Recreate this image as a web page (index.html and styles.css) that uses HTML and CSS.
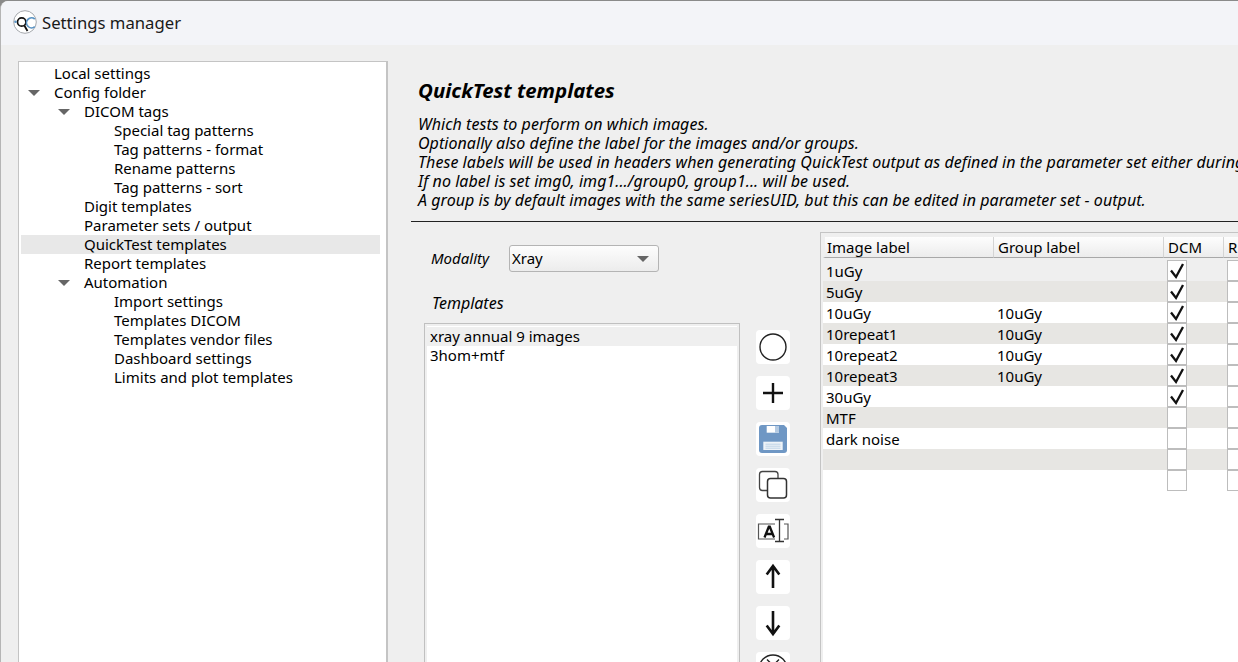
FILE: index.html
```html
<!DOCTYPE html>
<html lang="en">
<head>
<meta charset="utf-8">
<title>Settings manager</title>
<link rel="stylesheet" href="styles.css">
</head>
<body>
<svg class="defs" width="0" height="0"><defs><symbol id="tick" viewBox="0 0 18 19"><path d="M3 9.500L8 16 15 3" fill="none" stroke="#111" stroke-width="2.300"/></symbol></defs></svg>
<div class="window">
  <header class="titlebar">
    <svg class="logo" width="24" height="24" viewBox="0 0 24 24"><circle cx="12" cy="12" r="11.300" fill="#fff" stroke="#a5a8ad"/><circle cx="8.700" cy="12" r="4.200" fill="none" stroke="#111" stroke-width="1.700"/><path d="M11.300 15.500l3.200 5.500" stroke="#111" stroke-width="1.800"/><path d="M21.800 9a5 5 0 1 0 0 7.600" fill="none" stroke="#5a93c4" stroke-width="1.700"/><circle cx="2.500" cy="11.700" r="1.300" fill="#5a93c4"/></svg>
    <span class="wintitle">Settings manager</span>
  </header>
  <main class="main">
    <nav class="tree">
      <div class="node l0">Local settings</div>
      <div class="node l0 open">Config folder</div>
      <div class="node l1 open">DICOM tags</div>
      <div class="node l2">Special tag patterns</div>
      <div class="node l2">Tag patterns - format</div>
      <div class="node l2">Rename patterns</div>
      <div class="node l2">Tag patterns - sort</div>
      <div class="node l1">Digit templates</div>
      <div class="node l1">Parameter sets / output</div>
      <div class="node l1 selected">QuickTest templates</div>
      <div class="node l1">Report templates</div>
      <div class="node l1 open">Automation</div>
      <div class="node l2">Import settings</div>
      <div class="node l2">Templates DICOM</div>
      <div class="node l2">Templates vendor files</div>
      <div class="node l2">Dashboard settings</div>
      <div class="node l2">Limits and plot templates</div>
    </nav>
    <section class="content">
      <h1 class="heading">QuickTest templates</h1>
      <div class="intro">
        <p>Which tests to perform on which images.</p>
        <p>Optionally also define the label for the images and/or groups.</p>
        <p>These labels will be used in headers when generating QuickTest output as defined in the parameter set either during</p>
        <p>If no label is set img0, img1.../group0, group1... will be used.</p>
        <p>A group is by default images with the same seriesUID, but this can be edited in parameter set - output.</p>
      </div>
      <div class="rule"></div>
      <div class="columns">
        <div class="left">
          <div class="modality">
            <span class="label">Modality</span>
            <div class="combo"><span>Xray</span><i class="arrow"></i></div>
          </div>
          <div class="label tlabel">Templates</div>
          <div class="listrow">
            <div class="list">
              <div class="item current">xray annual 9 images</div>
              <div class="item">3hom+mtf</div>
            </div>
            <div class="tools">
              <div class="tool"><svg viewBox="0 0 34 34"><circle cx="17" cy="17" r="13" fill="none" stroke="#222" stroke-width="1.400"/></svg></div>
              <div class="tool"><svg viewBox="0 0 34 34"><path d="M7 17h20M17 7v20" stroke="#111" stroke-width="2.400" fill="none"/></svg></div>
              <div class="tool"><svg viewBox="0 0 34 34"><path d="M6 3h22l3 3v22a3 3 0 0 1-3 3H6a3 3 0 0 1-3-3V6a3 3 0 0 1 3-3z" fill="#6f97c4"/><path d="M10.700 4h12.300v6.700H10.700z" fill="#fff"/><path d="M19 4h4v6.700h-4z" fill="#b4cae2"/><path d="M7.300 19.700h19.400V28H7.300z" fill="#eef3f8"/><path d="M9.500 22.200h15M9.500 24.200h15M9.500 26.200h15" stroke="#b4cae2" stroke-width=".8"/></svg></div>
              <div class="tool"><svg viewBox="0 0 34 34"><rect x="3.500" y="3.500" width="18.500" height="19" rx="3" fill="#fff" stroke="#444" stroke-width="1.300"/><rect x="11.500" y="10.500" width="19" height="19.500" rx="3" fill="#fff" stroke="#333" stroke-width="1.500"/></svg></div>
              <div class="tool"><svg viewBox="0 0 34 34"><path d="M19 10H2.500v15H19M28 10h4v15h-4" fill="none" stroke="#555" stroke-width="1.200"/><path d="M8.500 23.500l4.300-10.800h1l4.300 10.800M10 20h7" fill="none" stroke="#111" stroke-width="2.300"/><path d="M19 5.500h9M19 27.500h9M23.500 5.500v22" fill="none" stroke="#333" stroke-width="1.300"/></svg></div>
              <div class="tool"><svg viewBox="0 0 34 34"><path d="M17 28V7M10.700 14.500L17 6l6.300 8.500" fill="none" stroke="#111" stroke-width="2.600"/></svg></div>
              <div class="tool"><svg viewBox="0 0 34 34"><path d="M17 5v22M10.700 19.500L17 28l6.300-8.500" fill="none" stroke="#111" stroke-width="2.600"/></svg></div>
              <div class="tool"><svg viewBox="0 0 34 34"><circle cx="17" cy="17" r="14" fill="none" stroke="#222" stroke-width="1.400"/><path d="M11 7.500l12 12M23 7.500l-12 12" stroke="#222" stroke-width="1.400" fill="none"/></svg></div>
            </div>
          </div>
        </div>
        <div class="grid">
          <table class="tests">
            <thead>
              <tr><th class="c1">Image label</th><th class="c2">Group label</th><th class="c3">DCM</th><th class="c4">R</th></tr>
            </thead>
            <tbody>
              <tr class="first"><td>1uGy</td><td></td><td class="chk"><span class="box"><svg class="tick"><use href="#tick"/></svg></span></td><td class="chk"><span class="box"></span></td></tr>
              <tr class="alt"><td>5uGy</td><td></td><td class="chk"><span class="box"><svg class="tick"><use href="#tick"/></svg></span></td><td class="chk"><span class="box"></span></td></tr>
              <tr><td>10uGy</td><td>10uGy</td><td class="chk"><span class="box"><svg class="tick"><use href="#tick"/></svg></span></td><td class="chk"><span class="box"></span></td></tr>
              <tr class="alt"><td>10repeat1</td><td>10uGy</td><td class="chk"><span class="box"><svg class="tick"><use href="#tick"/></svg></span></td><td class="chk"><span class="box"></span></td></tr>
              <tr><td>10repeat2</td><td>10uGy</td><td class="chk"><span class="box"><svg class="tick"><use href="#tick"/></svg></span></td><td class="chk"><span class="box"></span></td></tr>
              <tr class="alt"><td>10repeat3</td><td>10uGy</td><td class="chk"><span class="box"><svg class="tick"><use href="#tick"/></svg></span></td><td class="chk"><span class="box"></span></td></tr>
              <tr><td>30uGy</td><td></td><td class="chk"><span class="box"><svg class="tick"><use href="#tick"/></svg></span></td><td class="chk"><span class="box"></span></td></tr>
              <tr class="alt"><td>MTF</td><td></td><td class="chk"><span class="box"></span></td><td class="chk"><span class="box"></span></td></tr>
              <tr><td>dark noise</td><td></td><td class="chk"><span class="box"></span></td><td class="chk"><span class="box"></span></td></tr>
              <tr class="alt"><td></td><td></td><td class="chk"><span class="box"></span></td><td class="chk"><span class="box"></span></td></tr>
              <tr><td></td><td></td><td class="chk"><span class="box"></span></td><td class="chk"><span class="box"></span></td></tr>
            </tbody>
          </table>
        </div>
      </div>
    </section>
  </main>
</div>
</body>
</html>
```
FILE: styles.css
```css
* { box-sizing: border-box; }
html, body { margin: 0; height: 100%; overflow: hidden; background: #8a8a8a; }
body { font-family: "Noto Sans", sans-serif; font-size: 15px; color: #000; }
p { margin: 0; }
.defs { display: block; height: 0; }
.window { width: 1238px; height: 661px; margin-top: 1px; background: #efefef; border-top-left-radius: 8px; overflow: hidden; display: flex; flex-direction: column; border-left: 1px solid #b5b5b5; }
.titlebar { height: 44px; flex: none; background: #f3f4f8; display: flex; align-items: center; padding: 0 0 2px 12px; gap: 5px; }
.logo { flex: none; margin-top: -1px; }
.wintitle { font-size: 16.700px; color: #1a1a1a; }
.main { flex: 1; min-height: 0; display: flex; padding: 16px 0 0 17px; }
.tree { width: 370px; height: 640px; flex: none; background: #fff; border: 2px solid #c4c4c4; border-width: 1px 2px 1px 1px; padding: 2px 6px 0 2px; }
.node { height: 19px; line-height: 19px; white-space: nowrap; position: relative; }
.l0 { padding-left: 33px; }
.l1 { padding-left: 63px; }
.l2 { padding-left: 93px; }
.selected { background: #e8e8e8; }
.open::before { content: ""; position: absolute; top: 7px; border-left: 6px solid transparent; border-right: 6px solid transparent; border-top: 6px solid #666; }
.l0.open::before { left: 7px; }
.l1.open::before { left: 37px; }
.content { flex: 1; min-width: 0; padding: 17px 0 0 23px; }
.heading { margin: 0 0 0 7px; font-size: 20.400px; line-height: 24px; font-weight: 700; font-style: italic; white-space: nowrap; }
.intro { margin: 13px 0 0 7px; font-size: 16px; font-style: italic; line-height: 19px; letter-spacing: .05px; white-space: nowrap; }
.rule { height: 1px; background: #222; margin-top: 11px; }
.columns { display: flex; margin-top: 10px; }
.left { width: 409px; flex: none; padding: 13px 0 0 14px; }
.modality { display: flex; align-items: center; height: 27px; line-height: 25px; }
.label { font-style: italic; }
.modality .label { width: 78px; margin-left: 6px; }
.combo { width: 150px; height: 27px; border: 1px solid #b4b4b4; border-radius: 3px; background: linear-gradient(#fdfdfd, #ececec); display: flex; align-items: center; justify-content: space-between; padding: 0 9px 0 2px; }
.arrow { border-left: 6px solid transparent; border-right: 6px solid transparent; border-top: 6px solid #666; }
.tlabel { margin: 21px 0 0 7px; line-height: 20px; font-size: 16px; }
.listrow { display: flex; margin: 10px 0 0 -1px; gap: 16px; }
.list { width: 316px; height: 370px; flex: none; background: #fff; border: 1px solid #c0c0c0; padding: 3px 2px 0; box-shadow: inset 0 0 0 2px #efefef; }
.item { height: 19px; line-height: 19px; padding-left: 3px; }
.current { background: #efefef; }
.tools { display: flex; flex-direction: column; gap: 12px; padding-top: 7px; }
.tool { width: 34px; height: 34px; background: #fff; border-radius: 4px; }
.tool svg { display: block; width: 34px; height: 34px; }
.grid { flex: 1; min-width: 0; height: 440px; background: #fff; border: 1px solid #c4c4c4; border-right: 0; box-shadow: inset 0 4px 0 #efefef, inset 2px 0 0 #efefef; overflow: hidden; }
.tests { border-collapse: separate; border-spacing: 0; table-layout: fixed; width: 461px; margin: 4px 0 0 2px; }
.c1 { width: 171px; }
.c2 { width: 170px; }
.c3, .c4 { width: 60px; }
th { height: 21px; padding: 1px 0 0 4px; font-weight: 400; text-align: left; line-height: 19px; background: linear-gradient(#fdfdfd, #ececec); border-right: 1px solid #d4d4d4; border-bottom: 1px solid #a8a8a8; overflow: hidden; }
th.c1 { border-left: 2px solid #efefef; padding-left: 2px; }
td { height: 21px; padding: 0 0 0 3px; line-height: 20px; white-space: nowrap; }
.first td { background: #efefef; height: 23px; padding-top: 2px; }
.alt td { background: #e7e6e3; }
td.chk { padding-left: 3px; vertical-align: top; }
.box { display: block; width: 20px; height: 21px; background: #fff; border: 1px solid #bdbdbd; }
.tick { display: block; width: 18px; height: 19px; }
```
